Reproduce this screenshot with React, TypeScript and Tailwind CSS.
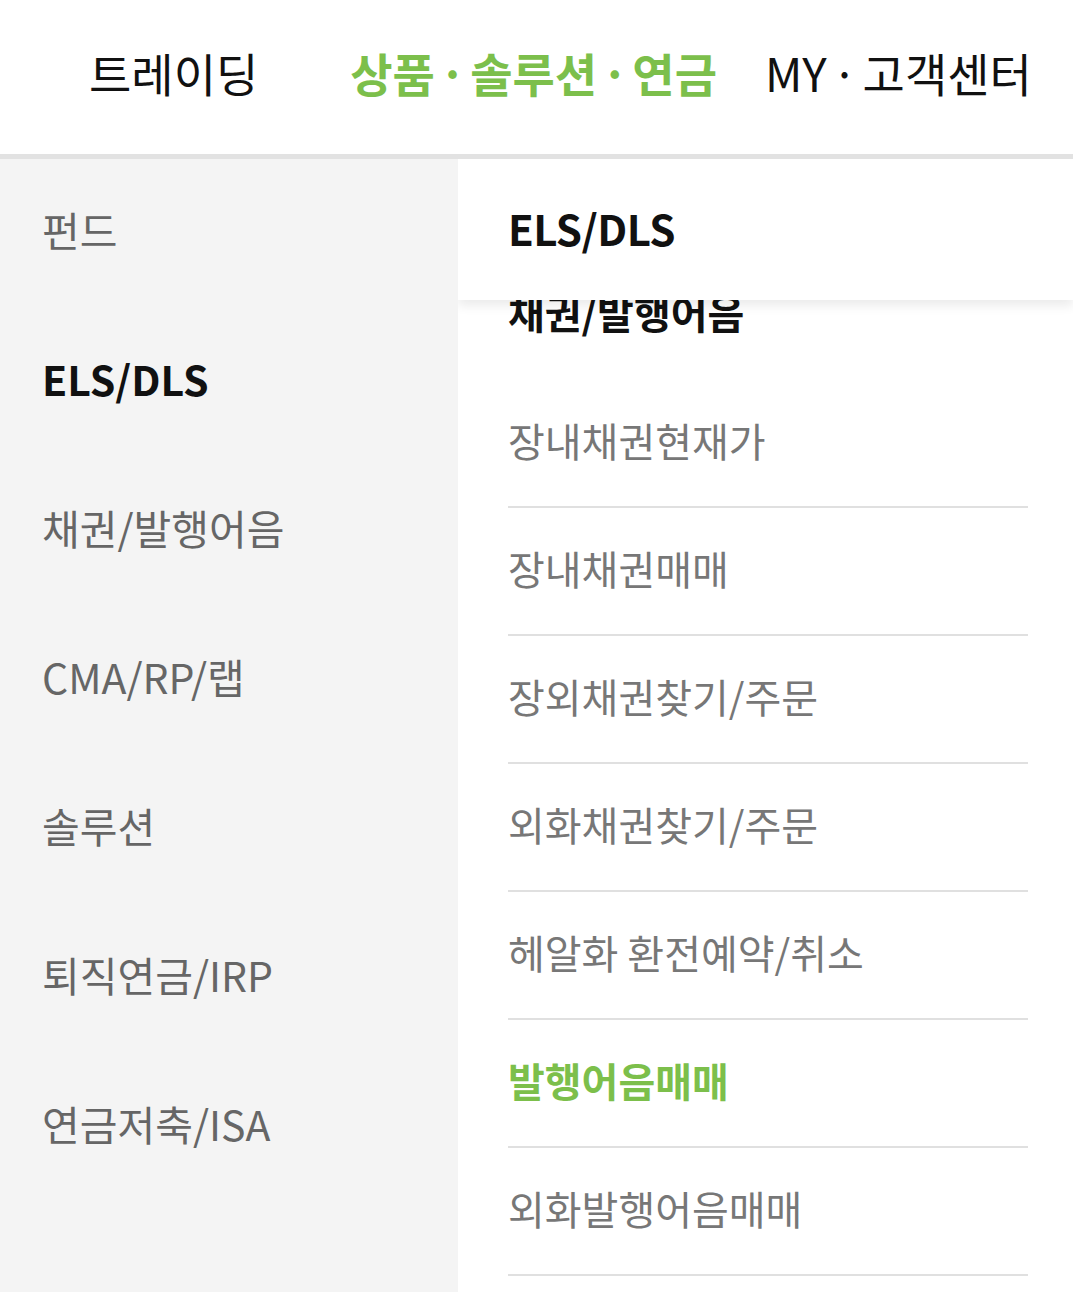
import React from 'react';

const sideItems = ['펀드', 'ELS/DLS', '채권/발행어음', 'CMA/RP/랩', '솔루션', '퇴직연금/IRP', '연금저축/ISA'];

const subItems = [
  '장내채권현재가',
  '장내채권매매',
  '장외채권찾기/주문',
  '외화채권찾기/주문',
  '헤알화 환전예약/취소',
  '발행어음매매',
  '외화발행어음매매',
];

export default function App() {
  return (
    <div className="h-[1292px] w-[1073px] overflow-hidden bg-white font-['Noto_Sans_CJK_KR','Noto_Sans',sans-serif]">
      {/* top tabs */}
      <div className="flex h-[154px] items-center pb-[10px] text-[46px] text-[#111]">
        <span className="ml-[89px]">트레이딩</span>
        <span className="ml-[92px] font-bold text-[#7cbf4b]">
          상품<span className="mx-[4px]">·</span>솔루션<span className="mx-[4px]">·</span>연금
        </span>
        <span className="ml-[48px]">
          MY<span className="mx-[5px]">·</span>고객센터
        </span>
      </div>
      <div className="h-[5px] bg-[#e2e2e2]" />

      <div className="flex h-[1133px]">
        {/* left category list */}
        <ul className="w-[458px] shrink-0 bg-[#f4f4f4]">
          {sideItems.map((item) => (
            <li
              key={item}
              className={`flex h-[149px] items-center pb-[8px] pl-[42px] text-[41px] ${
                item === 'ELS/DLS' ? 'font-bold text-[#111]' : 'text-[#666]'
              }`}
            >
              {item}
            </li>
          ))}
        </ul>

        {/* right sub menu */}
        <div className="flex flex-1 flex-col overflow-hidden">
          <div className="relative z-10 flex h-[141px] shrink-0 items-center bg-white pb-[4px] pl-[50px] text-[42px] font-bold tracking-[-0.5px] text-[#111] shadow-[0_6px_10px_rgba(0,0,0,0.08)]">
            ELS/DLS
          </div>
          <div className="-mt-[50px] pl-[50px] pr-[45px]">
            <div className="flex h-[130px] items-center pb-[6px] text-[40px] font-bold text-[#111]">
              채권/발행어음
            </div>
            <ul>
              {subItems.map((item) => (
                <li
                  key={item}
                  className={`flex h-[128px] items-center border-b-2 border-[#e0e0e0] pb-[6px] text-[40px] ${
                    item === '발행어음매매' ? 'font-bold text-[#7cbf4b]' : 'text-[#777]'
                  }`}
                >
                  {item}
                </li>
              ))}
            </ul>
          </div>
        </div>
      </div>
    </div>
  );
}
